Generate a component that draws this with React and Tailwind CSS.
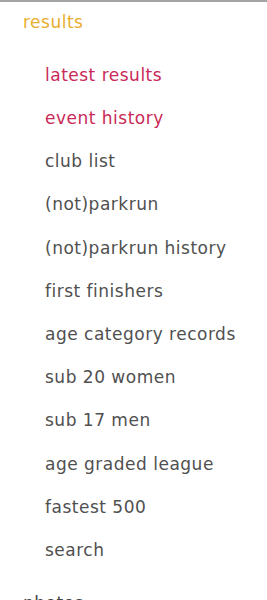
import React from 'react'

const subLinks = [
    { label: 'latest results', active: true },
    { label: 'event history', active: true },
    { label: 'club list' },
    { label: '(not)parkrun' },
    { label: '(not)parkrun history' },
    { label: 'first finishers' },
    { label: 'age category records' },
    { label: 'sub 20 women' },
    { label: 'sub 17 men' },
    { label: 'age graded league' },
    { label: 'fastest 500' },
    { label: 'search' },
];

function App() {
    return (
        <nav className='w-[267px] h-[600px] overflow-hidden bg-white border-t-[2px] border-[#a3a3a3] pt-[2px] tracking-[0.5px]' style={{ fontFamily: '"DejaVu Sans", "Noto Sans", sans-serif' }}>
            <ul>
                <li>
                    <a className='flex items-center h-[38px] pl-[23px] text-[17px] text-[#e8ae2e]'>results</a>
                    <ul className='pt-[12px] pb-[12px]'>
                        {subLinks.map((link, idx) => (
                            <li key={idx}>
                                <a className={`flex items-center h-[43.2px] pl-[45px] text-[17px] ${link.active ? 'text-[#c92a58]' : 'text-[#505050]'}`}>
                                    {link.label}
                                </a>
                            </li>
                        ))}
                    </ul>
                </li>
                <li>
                    <a className='flex items-center h-[38px] pl-[23px] text-[17px] text-[#444444]'>photos</a>
                </li>
            </ul>
        </nav>
    );
}

export default App;
